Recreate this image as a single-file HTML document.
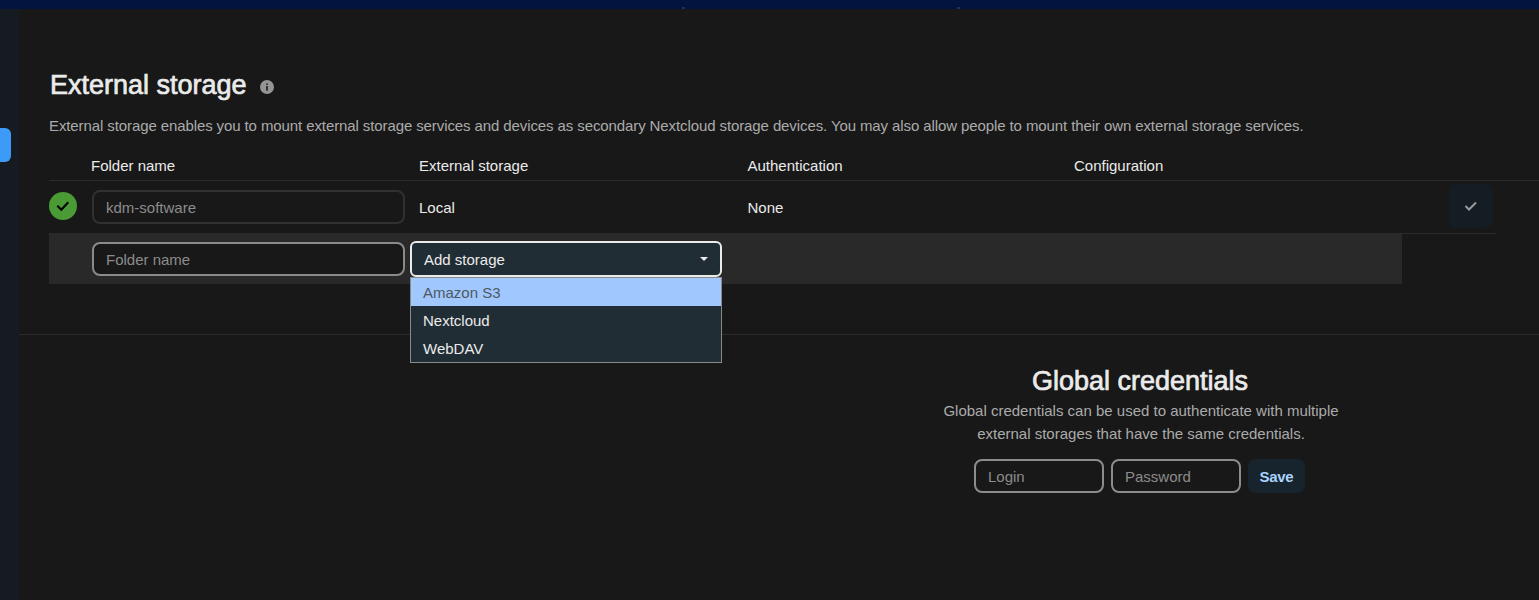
<!DOCTYPE html>
<html><head><meta charset="utf-8">
<style>
*{box-sizing:border-box;margin:0;padding:0}
html,body{width:1539px;height:600px;overflow:hidden;background:#181818;font-family:"Liberation Sans",sans-serif;color:#ebebeb}
.abs{position:absolute;white-space:nowrap}
#top{left:0;top:0;width:1539px;height:9px;background:#03153e}
#side{left:0;top:9px;width:19px;height:591px;background:#161a21}
#blue{left:0;top:128px;width:11px;height:34px;background:#3c9bf6;border-radius:0 6px 6px 0}
#h1{left:50px;top:68px;font-size:27px;color:#ebebeb;line-height:34px;-webkit-text-stroke:0.7px #ebebeb}
#info{left:259px;top:79px;width:16px;height:16px}
#desc{left:49px;top:117px;font-size:15px;color:#ababab;line-height:18px;letter-spacing:-0.1px}
.th{top:157px;font-size:15px;line-height:18px;color:#ebebeb}
.line{height:1px;background:#2b2b2b}
#ok{left:49px;top:192px;width:28px;height:28px}
.inp{border:2px solid #3b3b3b;border-radius:8px;font-size:15px;line-height:30px;padding-top:1px;padding-left:12px;background:#181818}
.td{font-size:15px;line-height:18px;color:#ebebeb}
#okbtn{left:1449px;top:184px;width:44px;height:44px;border-radius:8px;background:#151d24}
#newrow{left:49px;top:234px;width:1353px;height:50px;background:#292929}
#newrow~.inp{}
#sel{left:410px;top:241px;width:312px;height:36px;border:2px solid #ebebeb;border-radius:6px;background:#212d34;font-size:15px;line-height:32px;padding-top:1px;padding-left:12px;color:#ebebeb}
#caret{position:absolute;left:288px;top:14px;width:0;height:0;border-left:4px solid transparent;border-right:4px solid transparent;border-top:4px solid #ebebeb}
#dd{z-index:5;left:410px;top:277px;width:312px;height:86px;border:1px solid #8a8a8a;background:#212d34;font-size:15px;color:#ebebeb}
#dd .it{height:28px;line-height:28px;padding-top:1px;padding-left:12px}
#dd .hl{background:#a0c7fe;color:#4f5862}
#gh{left:1032px;top:364px;font-size:27px;line-height:34px;-webkit-text-stroke:0.7px #ebebeb}
#gd{left:940px;top:399px;width:402px;text-align:center;font-size:15px;line-height:23px;color:#ababab;white-space:normal}
#save{left:1248px;top:459px;width:57px;height:34px;border-radius:8px;background:#18242d;color:#a8d4ff;font-weight:bold;font-size:15px;line-height:34px;padding-top:1px;letter-spacing:-0.3px;text-align:center}
</style></head><body>
<div class="abs" id="top"></div>
<div class="abs" id="side"></div>
<div class="abs" style="left:682px;top:7px;width:3px;height:2px;background:#2a3557;border-radius:1px"></div>
<div class="abs" style="left:957px;top:7px;width:3px;height:2px;background:#2a3557;border-radius:1px"></div>
<div class="abs" id="blue"></div>
<div class="abs" id="h1">External storage</div>
<div class="abs" id="info"><svg width="16" height="16" viewBox="0 0 16 16"><circle cx="8" cy="8" r="7" fill="#949494"/><rect x="7" y="4.5" width="2" height="1.4" fill="#333"/><rect x="7" y="7" width="2" height="4.6" fill="#333"/></svg></div>
<div class="abs" id="desc">External storage enables you to mount external storage services and devices as secondary Nextcloud storage devices. You may also allow people to mount their own external storage services.</div>
<div class="abs th" style="left:91px">Folder name</div>
<div class="abs th" style="left:419px">External storage</div>
<div class="abs th" style="left:747.5px">Authentication</div>
<div class="abs th" style="left:1074px">Configuration</div>
<div class="abs line" style="left:49px;top:180px;width:1490px"></div>
<div class="abs" id="ok"><svg width="28" height="28" viewBox="0 0 28 28"><circle cx="14" cy="14" r="14" fill="#4a9a36"/><path d="M8.3 13.7 L12.3 17.7 L19.3 10.3" fill="none" stroke="#000" stroke-width="2.2"/></svg></div>
<div class="abs inp" style="left:92px;top:190px;width:313px;height:34px;border-color:#313131;color:#8c8c8c">kdm-software</div>
<div class="abs td" style="left:419px;top:199px">Local</div>
<div class="abs td" style="left:747.5px;top:199px">None</div>
<div class="abs" id="okbtn"><svg width="44" height="44" viewBox="0 0 44 44"><path d="M16.5 22 L20 25.5 L27 18.5" fill="none" stroke="#9a9a9a" stroke-width="2"/></svg></div>
<div class="abs line" style="left:49px;top:233px;width:1447px"></div>
<div class="abs" id="newrow"></div>
<div class="abs inp" style="left:92px;top:242px;width:313px;height:34px;border-color:#8a8a8a;color:#8c8c8c">Folder name</div>
<div class="abs" id="sel">Add storage<span id="caret"></span></div>
<div class="abs" id="dd"><div class="it hl">Amazon S3</div><div class="it">Nextcloud</div><div class="it">WebDAV</div></div>
<div class="abs line" style="left:19px;top:334px;width:1520px"></div>
<div class="abs" id="gh">Global credentials</div>
<div class="abs" id="gd">Global credentials can be used to authenticate with multiple<br>external storages that have the same credentials.</div>
<div class="abs inp" style="left:974px;top:459px;width:130px;height:34px;border-color:#8c8c8c;color:#8c8c8c">Login</div>
<div class="abs inp" style="left:1111px;top:459px;width:130px;height:34px;border-color:#8c8c8c;color:#8c8c8c">Password</div>
<div class="abs" id="save">Save</div>
</body></html>
